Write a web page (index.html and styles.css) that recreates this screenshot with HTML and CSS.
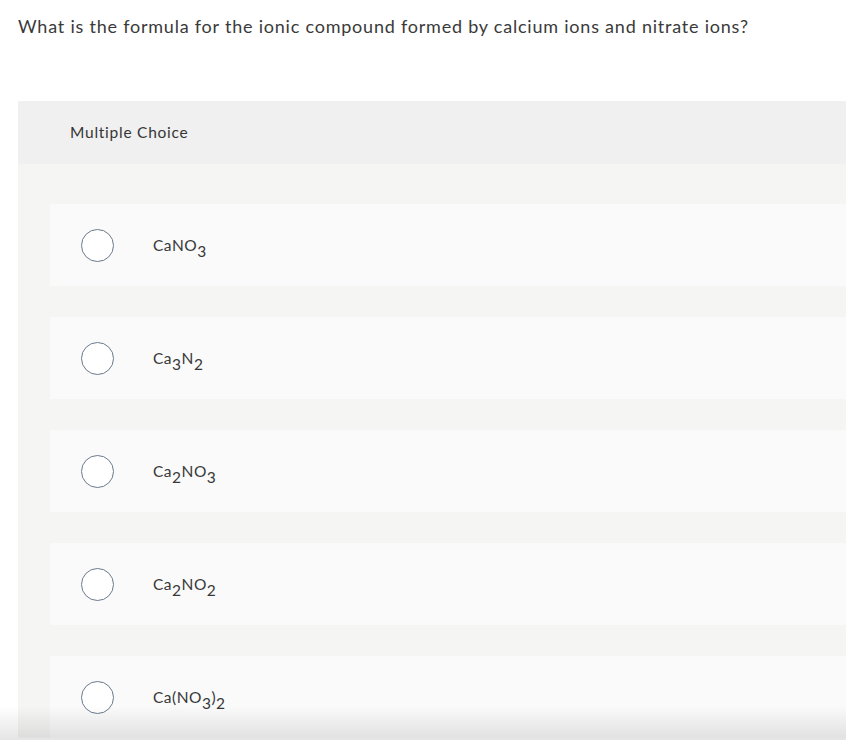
FILE: index.html
```html
<!DOCTYPE html>
<html lang="en">
<head>
<meta charset="utf-8">
<title>Question</title>
<link rel="stylesheet" href="styles.css">
</head>
<body>
<div class="page">
  <p class="question">What is the formula for the ionic compound formed by calcium ions and nitrate ions?</p>
  <section class="card">
    <header class="card-head">Multiple Choice</header>
    <div class="options">
      <div class="option"><span class="radio"></span><span class="label">CaNO<sub>3</sub></span></div>
      <div class="option"><span class="radio"></span><span class="label">Ca<sub>3</sub>N<sub>2</sub></span></div>
      <div class="option"><span class="radio"></span><span class="label">Ca<sub>2</sub>NO<sub>3</sub></span></div>
      <div class="option"><span class="radio"></span><span class="label">Ca<sub>2</sub>NO<sub>2</sub></span></div>
      <div class="option"><span class="radio"></span><span class="label">Ca(NO<sub>3</sub>)<sub>2</sub></span></div>
    </div>
  </section>
</div>
<div class="fade"></div>
</body>
</html>
```

FILE: styles.css
```css
html, body {
  margin: 0;
  padding: 0;
  background: #ffffff;
  overflow: hidden;
}
body {
  font-family: Lato, "Open Sans", Arial, sans-serif;
  color: #333333;
}
.page {
  padding: 0 0 0 18px;
}
.question {
  margin: 0;
  padding-top: 14px;
  font-size: 18px;
  line-height: 24px;
  letter-spacing: 0.78px;
  color: #3a3a3a;
}
.card {
  margin-top: 63px;
  margin-right: -40px;
  background: #f5f5f4;
}
.card-head {
  height: 63px;
  background: #f0f0f0;
  padding-left: 52px;
  font-size: 15.5px;
  line-height: 63px;
  letter-spacing: 0.75px;
  color: #363636;
}
.options {
  display: flex;
  flex-direction: column;
  gap: 31px;
  padding: 40px 0 0 32px;
}
.option {
  height: 82px;
  background: #fafafa;
  display: flex;
  align-items: center;
  padding-left: 31px;
}
.radio {
  width: 31px;
  height: 31px;
  border: 1.5px solid #6b7a8c;
  border-radius: 50%;
  background: #ffffff;
  flex: none;
}
.label {
  margin-left: 39px;
  font-size: 15.5px;
  letter-spacing: 0.5px;
  color: #383838;
}
.label sub {
  font-size: 15.5px;
  vertical-align: -6px;
  line-height: 0;
}
.fade {
  position: fixed;
  left: 0;
  right: 0;
  bottom: 0;
  height: 34px;
  background: linear-gradient(to bottom, rgba(0,0,0,0), rgba(0,0,0,0.1));
  pointer-events: none;
}
```
